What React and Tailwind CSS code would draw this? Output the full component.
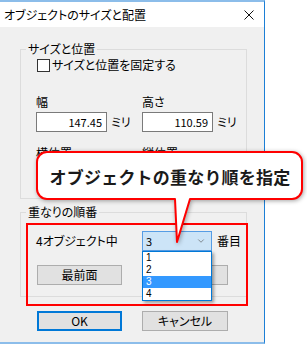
import { ChevronDown } from 'lucide-react';

const Btn = ({ children, primary = false, className = '' }) => (
  <div
    className={`flex h-[20px] items-center justify-center bg-[#e1e1e1] text-[12px] leading-none text-black ${
      primary ? 'border-2 border-[#0078d7]' : 'border border-[#adadad]'
    } ${className}`}
  >
    {children}
  </div>
);

const Field = ({ label, value }) => (
  <div className="flex flex-col">
    <div className="h-[16px] text-[12px] leading-[16px]">{label}</div>
    <div className="mt-[2px] flex items-center">
      <div className="flex h-[20px] w-[71px] items-center justify-end border border-[#7a7a7a] bg-white pr-[4px] text-[11px] leading-none">
        {value}
      </div>
      {value && <span className="ml-[4px] text-[12px] leading-none">ミリ</span>}
    </div>
  </div>
);

const Callout = () => (
  <div className="absolute left-[36px] top-[151px] h-[94px] w-[268px]">
    <svg
      width="268"
      height="94"
      viewBox="0 0 268 94"
      className="drop-shadow-[1px_1px_2px_rgba(0,0,0,0.35)]"
    >
      <path
        d="M11 1H256A10 10 0 0 1 266 11V38A10 10 0 0 1 256 48H154L141 91L139 48H11A10 10 0 0 1 1 38V11A10 10 0 0 1 11 1Z"
        fill="#fff"
        stroke="#ff0000"
        strokeWidth="2"
        strokeLinejoin="round"
      />
    </svg>
    {/* text inside the bubble */}
    <div className="absolute left-0 top-0 flex h-[50px] w-[268px] items-center justify-center text-[17px] font-bold leading-none tracking-[0.2px] text-[#1a1a1a] [font-feature-settings:normal]">
      オブジェクトの重なり順を指定
    </div>
  </div>
);

export default function App() {
  return (
    <div className="relative h-[344px] w-[307px] overflow-hidden bg-white font-['Noto_Sans_CJK_JP',sans-serif] text-black [font-feature-settings:'palt']">
      <div className="flex h-[344px] w-[265px] flex-col border-b-2 border-r border-t-2 border-b-[#8cbdea] border-r-[#1c7fd6] border-t-[#8cbdea] bg-[#f0f0f0]">
        {/* title bar */}
        <div className="flex h-[25px] shrink-0 items-center justify-between bg-white pl-[4px] pr-[10px]">
          <span className="text-[12px] leading-none">オブジェクトのサイズと配置</span>
          <svg width="10" height="10" viewBox="0 0 10 10">
            <path d="M0.5 0.5L9.5 9.5M9.5 0.5L0.5 9.5" stroke="#111" strokeWidth="1" />
          </svg>
        </div>

        <div className="flex flex-1 flex-col pl-[20px] pr-[17px]">
          {/* サイズと位置 */}
          <fieldset className="mt-[14px] h-[158px] border border-[#dcdcdc]">
            <legend className="ml-[5px] px-[2px] text-[12px] leading-[16px]">サイズと位置</legend>
            <div className="pl-[15px] pt-[1px]">
              <div className="flex h-[14px] items-center">
                <div className="ml-[1px] h-[13px] w-[13px] border border-[#333] bg-white" />
                <span className="ml-[2px] text-[12px] leading-none">サイズと位置を固定する</span>
              </div>
              <div className="mt-[22px] grid grid-cols-[106px_1fr]">
                <Field label="幅" value="147.45" />
                <Field label="高さ" value="110.59" />
              </div>
              {/* second row sits under the callout */}
              <div className="mt-[13px] grid grid-cols-[106px_1fr]">
                <Field label="横位置" value="" />
                <Field label="縦位置" value="" />
              </div>
            </div>
          </fieldset>

          {/* 重なりの順番 */}
          <fieldset className="mt-[5px] h-[93px] border border-[#dcdcdc]">
            <legend className="ml-[5px] px-[2px] text-[12px] leading-[16px]">重なりの順番</legend>
            <div className="pl-[15px]">
              <div className="mt-[11px] grid grid-cols-[106px_1fr] items-center">
                <span className="text-[12px] leading-none">4オブジェクト中</span>
                <div className="flex items-center">
                  <div className="relative">
                    <div className="flex h-[20px] w-[70px] items-center justify-between border border-[#569de5] bg-[#cce4f7] pl-[3px] pr-[5px] text-[11px] leading-none">
                      <span>3</span>
                      <ChevronDown size={10} strokeWidth={1.5} className="text-[#555]" />
                    </div>
                    {/* open dropdown list */}
                    <div className="absolute left-0 top-full z-10 flex w-[70px] flex-col border border-[#0078d7] bg-white font-['Liberation_Sans',sans-serif] text-[10px] leading-[12px] shadow-[2px_2px_3px_rgba(0,0,0,0.35)]">
                      <div className="h-[12px] pl-[3px]">1</div>
                      <div className="h-[12px] pl-[3px]">2</div>
                      <div className="h-[12px] bg-[#3399ff] pl-[3px] text-white">3</div>
                      <div className="h-[12px] pl-[3px]">4</div>
                    </div>
                  </div>
                  <span className="ml-[5px] text-[12px] leading-none">番目</span>
                </div>
              </div>
              <div className="mt-[14px] grid grid-cols-[106px_1fr]">
                <Btn className="ml-[1px] w-[85px]">最前面</Btn>
                {/* covered by the open list */}
                <Btn className="w-[86px]" />
              </div>
            </div>
          </fieldset>

          <div className="mt-[14px] flex">
            <Btn primary className="ml-[17px] w-[85px]">OK</Btn>
            <Btn className="ml-[20px] w-[86px]">キャンセル</Btn>
          </div>
        </div>
      </div>

      {/* red highlight around the stacking order group */}
      <div className="absolute left-[26px] top-[223px] h-[83px] w-[222px] border-2 border-[#ff0000]" />

      <Callout />
    </div>
  );
}
